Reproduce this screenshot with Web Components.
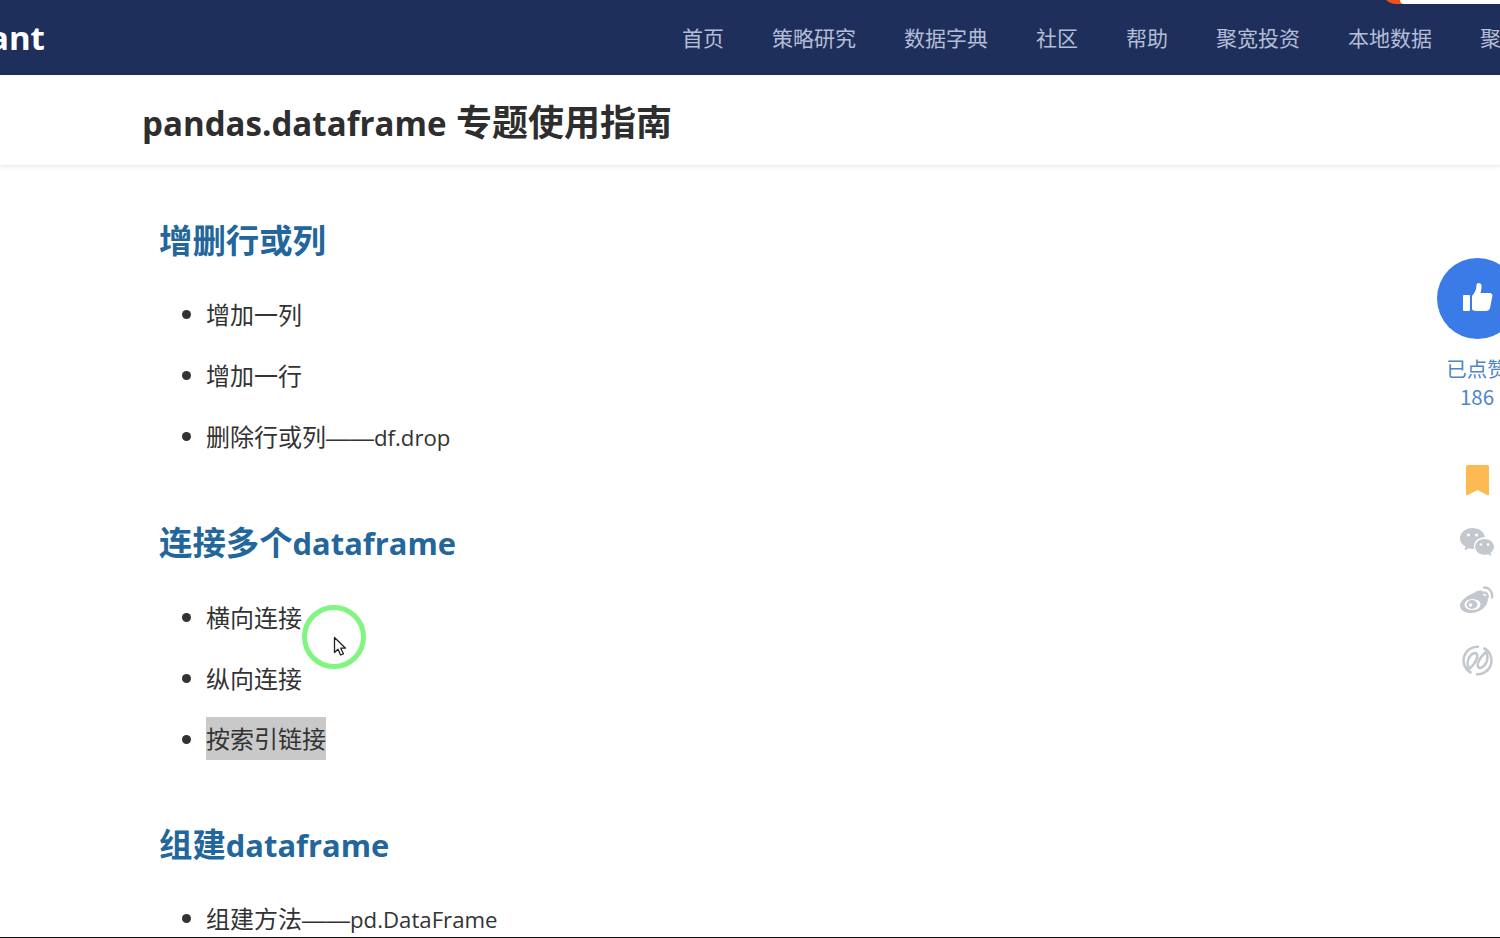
<!DOCTYPE html>
<html lang="zh">
<head>
<meta charset="utf-8">
<title>pandas.dataframe 专题使用指南</title>
<style>
    html, body {
        margin: 0;
        height: 938px;
        overflow: hidden;
        background: #fff;
    }
    body {
        position: relative;
        display: flex;
        flex-direction: column;
        font-family: "Open Sans", "Noto Sans CJK SC", sans-serif;
        color: #333;
    }
    main {
        flex: 1;
        min-height: 0;
        overflow: hidden;
        padding: 51px 0 0 159px;
    }
    .endline {
        height: 1px;
        background: #111;
        flex: none;
    }
    .sel {
        display: inline-block;
        line-height: 43px;
        background: #c9c9c9;
    }
    /* the latin runs are narrower than Open Sans in the shot */
    page-title .lat { font-size: 33.1px; }
    doc-section .lat { font-size: 30.9px; }
    doc-item .lat { font-size: 22.2px; }
    doc-section.tight {
        --head-gap: 20px;
        --tail-gap: 50px;
    }
    .dash {
        font-family: "Liberation Sans", sans-serif;
        font-size: 24px;
    }
</style>
</head>
<body>
<top-nav logo="ant">
    <a>首页</a><a>策略研究</a><a>数据字典</a><a>社区</a><a>帮助</a><a>聚宽投资</a><a>本地数据</a><a>聚宽学院</a>
</top-nav>
<page-title><span class="lat">pandas.dataframe</span> 专题使用指南</page-title>
<main>
    <doc-section>
        <span slot="heading">增删行或列</span>
        <doc-item>增加一列</doc-item>
        <doc-item>增加一行</doc-item>
        <doc-item><span>删除行或列<span class="dash">——</span><span class="lat">df.drop</span></span></doc-item>
    </doc-section>
    <doc-section class="tight">
        <span slot="heading">连接多个<span class="lat">dataframe</span></span>
        <doc-item>横向连接</doc-item>
        <doc-item>纵向连接</doc-item>
        <doc-item><span class="sel">按索引链接</span></doc-item>
    </doc-section>
    <doc-section>
        <span slot="heading">组建<span class="lat">dataframe</span></span>
        <doc-item><span>组建方法<span class="dash">——</span><span class="lat">pd.DataFrame</span></span></doc-item>
    </doc-section>
</main>
<div class="endline"></div>
<float-actions count="186"></float-actions>
<cursor-ring></cursor-ring>

<script>
class TopNav extends HTMLElement {
    constructor() {
        super();
        const shadow = this.attachShadow({ mode: "open" });
        shadow.innerHTML = /* html */ `
        <style>
            :host {
                display: flex;
                flex: none;
                position: relative;
                height: 75px;
                align-items: center;
                background: #1f2f5c;
                overflow: hidden;
            }
            .logo {
                margin-left: -11px;
                width: 693px;
                flex: none;
                color: #fff;
                font: 700 33px "Open Sans", sans-serif;
                margin-top: -1px;
            }
            nav {
                display: flex;
                flex: none;
                gap: 48px;
                margin-top: -2px;
                color: #b3bed6;
                font: 21px "Noto Sans CJK SC", sans-serif;
                white-space: nowrap;
            }
            .promo {
                position: absolute;
                top: 0;
                right: 0;
                width: 100px;
                height: 4px;
                background: #fff;
            }
            .promo::before {
                content: "";
                position: absolute;
                left: -18px;
                top: -10px;
                width: 40px;
                height: 14px;
                border-radius: 0 0 0 22px;
                background: #f0511c;
            }
            .promo::after {
                content: "";
                position: absolute;
                inset: 0;
                background: #fff;
                border-bottom-left-radius: 4px;
            }
        </style>
        <div class="logo"></div>
        <nav><slot></slot></nav>
        <div class="promo"></div>
        `;
    }

    connectedCallback() {
        this.shadowRoot.querySelector('.logo').textContent = this.getAttribute('logo');
    }
}

class PageTitle extends HTMLElement {
    constructor() {
        super();
        const shadow = this.attachShadow({ mode: "open" });
        shadow.innerHTML = /* html */ `
        <style>
            :host {
                display: flex;
                flex: none;
                position: relative;
                box-sizing: border-box;
                height: 90px;
                padding: 1px 0 0 142px;
                align-items: center;
                background: #fff;
                color: #2e2e2e;
                font: 700 36px "Open Sans", "Noto Sans CJK SC", sans-serif;
                box-shadow: 0 1px 4px rgba(0, 0, 0, 0.12);
                white-space: pre;
            }
        </style>
        <div><slot></slot></div>
        `;
    }
}

class DocSection extends HTMLElement {
    constructor() {
        super();
        const shadow = this.attachShadow({ mode: "open" });
        shadow.innerHTML = /* html */ `
        <style>
            :host {
                display: block;
                margin-bottom: var(--tail-gap, 51px);
            }
            h2 {
                margin: 0 0 var(--head-gap, 19px);
                height: 49px;
                color: #22669c;
                font: 700 33.4px/49px "Open Sans", "Noto Sans CJK SC", sans-serif;
                white-space: nowrap;
            }
        </style>
        <h2><slot name="heading"></slot></h2>
        <slot></slot>
        `;
    }
}

class DocItem extends HTMLElement {
    constructor() {
        super();
        const shadow = this.attachShadow({ mode: "open" });
        shadow.innerHTML = /* html */ `
        <style>
            :host {
                display: flex;
                align-items: center;
                box-sizing: border-box;
                height: 61px;
                padding-bottom: 2px;
                color: #333;
                font: 24px "Open Sans", "Noto Sans CJK SC", sans-serif;
                white-space: nowrap;
            }
            .dot {
                width: 9px;
                height: 9px;
                margin: 1px 15px 0 23px;
                border-radius: 50%;
                background: #333;
                flex: none;
            }
        </style>
        <span class="dot"></span>
        <slot></slot>
        `;
    }
}

class FloatActions extends HTMLElement {
    constructor() {
        super();
        const shadow = this.attachShadow({ mode: "open" });
        shadow.innerHTML = /* html */ `
        <style>
            :host {
                position: absolute;
                top: 258px;
                right: -37px;
                width: 120px;
                display: flex;
                flex-direction: column;
                align-items: center;
            }
            .like {
                width: 81px;
                height: 81px;
                border-radius: 50%;
                background: #3b7be8;
                display: flex;
                align-items: center;
                justify-content: center;
            }
            .like svg {
                margin: -4px 0 0 1px;
            }
            .label {
                margin-top: 15px;
                color: #4f86c6;
                font: 20.5px/28px "Noto Sans CJK SC", sans-serif;
                text-align: center;
                white-space: nowrap;
            }
            .icons {
                margin-top: 55px;
                display: flex;
                flex-direction: column;
                align-items: center;
                gap: 32px;
            }
            svg {
                display: block;
            }
            .weibo { margin-top: -3px; }
        </style>
        <div class="like">
            <svg width="30" height="30" viewBox="0 0 30 30" fill="#fff">
                <rect x="0" y="13" width="7" height="16" rx="1"/>
                <path d="M9 14 C12 11 13.5 7 13.5 3 C13.5 0.5 18.5 0 18.5 4 C18.5 7 18 9 17.5 11 H26 C29 11 30 13 29.2 15 L27 26 C26.5 28 25 29 23 29 H13 C11 29 9 28 9 27 Z"/>
            </svg>
        </div>
        <div class="label">已点赞<br><span class="count"></span></div>
        <div class="icons">
            <svg width="23" height="31" viewBox="0 0 23 31">
                <path fill="#fdb952" d="M2 0 H21 Q23 0 23 2 V29 Q23 31 21 30 L11.5 25 L2 30 Q0 31 0 29 V2 Q0 0 2 0 Z"/>
            </svg>
            <svg class="wechat" width="34" height="29" viewBox="0 0 34 29" fill="#c3c8cf">
                <path d="M12.5 0 C19 0 24.5 4 25 9.4 C19 9 14 13 14 18 C14 19 14.2 19.8 14.5 20.6 C13.5 20.8 13 20.8 12.5 20.8 C11 20.8 9.8 20.6 8.5 20.2 L4.5 22.4 L5.5 18.6 C2 16.6 0 13.8 0 10.4 C0 4.6 5.6 0 12.5 0 Z"/>
                <path d="M24.5 11 C29.8 11 34 14.4 34 18.8 C34 21.2 32.8 23.2 30.6 24.8 L31.4 28 L28 26.2 C26.8 26.5 25.6 26.8 24.5 26.8 C19.2 26.8 15.2 23.2 15.2 18.8 C15.2 14.4 19.2 11 24.5 11 Z"/>
                <circle cx="8.5" cy="7" r="1.6" fill="#fff"/><circle cx="16.5" cy="7" r="1.6" fill="#fff"/>
                <circle cx="21" cy="16.5" r="1.3" fill="#fff"/><circle cx="28" cy="16.5" r="1.3" fill="#fff"/>
            </svg>
            <svg class="weibo" width="34" height="27" viewBox="0 0 34 27" fill="none">
                <path fill="#c3c8cf" d="M14 7 C18 4 22 4 23 6 C23.6 7.2 23.2 8.6 23 9.6 C26 9 28 10.4 28 13 C28 20 20 27 11 27 C5 27 0 24 0 19.4 C0 15.4 7 9 14 7 Z"/>
                <ellipse cx="12.5" cy="18.5" rx="8" ry="5.6" fill="#fff"/>
                <ellipse cx="12" cy="18.5" rx="5.4" ry="4.4" fill="#c3c8cf"/>
                <circle cx="10.5" cy="19" r="1.8" fill="#fff"/>
                <path stroke="#c3c8cf" stroke-width="2.4" stroke-linecap="round" d="M24 1.5 C29.5 1.5 33 6 32 11.5 M24 6.5 C26.5 6.5 28 8.5 27.6 11"/>
            </svg>
            <svg width="31" height="31" viewBox="0 0 31 31" fill="none" stroke="#c3c8cf" stroke-width="2.5">
                <path d="M17 1.8 A13.8 13.8 0 0 0 9.5 28"/>
                <path d="M14 29.2 A13.8 13.8 0 0 0 21.5 3"/>
                <path stroke-linejoin="round" d="M7 24 C3.5 17 7 10 12.5 8 C15.5 7.5 16 11.5 14.2 15 C12.8 18.5 10 21.5 7 24 Z"/>
                <path stroke-linejoin="round" transform="rotate(180 15.5 15.5)" d="M7 24 C3.5 17 7 10 12.5 8 C15.5 7.5 16 11.5 14.2 15 C12.8 18.5 10 21.5 7 24 Z"/>
            </svg>
        </div>
        `;
    }

    connectedCallback() {
        this.shadowRoot.querySelector('.count').textContent = this.getAttribute('count');
    }
}

class CursorRing extends HTMLElement {
    constructor() {
        super();
        const shadow = this.attachShadow({ mode: "open" });
        shadow.innerHTML = /* html */ `
        <style>
            :host {
                position: absolute;
                left: 302px;
                top: 605px;
                width: 64px;
                height: 64px;
            }
            svg {
                display: block;
            }
        </style>
        <svg width="64" height="64" viewBox="0 0 64 64">
            <circle cx="32" cy="32" r="29.5" fill="none" stroke="#80f57f" stroke-width="5"/>
            <path fill="#fff" stroke="#222" stroke-width="1.3" stroke-linejoin="round"
                d="M32.5 32.5 V47.5 L36 44.2 L38.6 50 L41.4 48.8 L38.8 43.2 L43.5 43.2 Z"/>
        </svg>
        `;
    }
}

customElements.define("top-nav", TopNav);
customElements.define("page-title", PageTitle);
customElements.define("doc-section", DocSection);
customElements.define("doc-item", DocItem);
customElements.define("float-actions", FloatActions);
customElements.define("cursor-ring", CursorRing);
</script>
</body>
</html>
